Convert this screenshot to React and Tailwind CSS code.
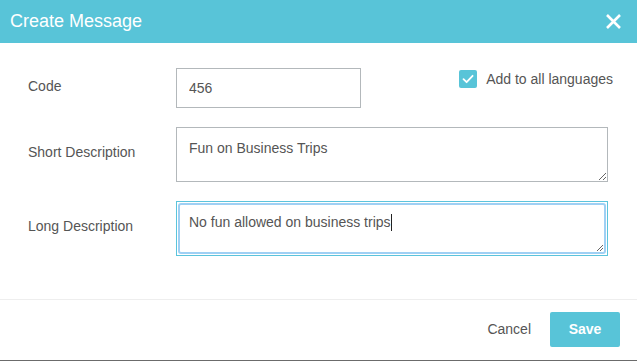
import { useState } from "react";

const font = { fontFamily: '"Liberation Sans", Arial, sans-serif' };

function Checkbox({ checked, onChange }) {
  return (
    <button
      onClick={() => onChange(!checked)}
      className="w-[18px] h-[18px] rounded-[2px] bg-[#58c4d8] flex items-center justify-center"
    >
      {checked && (
        <svg width="14" height="14" viewBox="0 0 14 14" fill="none">
          <path d="M2.5 7.2 L5.6 10.2 L11.6 3.8" stroke="#fff" strokeWidth="1.8" strokeLinecap="round" strokeLinejoin="round" />
        </svg>
      )}
    </button>
  );
}

export default function App() {
  const [allLangs, setAllLangs] = useState(true);

  return (
    <div className="w-[637px] h-[361px] bg-white flex flex-col border-b border-[#6b6b6b] text-[#555]" style={font}>
      {/* Header */}
      <div className="h-[43px] bg-[#58c4d8] flex items-center justify-between pl-[10px] pr-[15px]">
        <h1 className="text-[18px] text-white">Create Message</h1>
        <svg width="17" height="17" viewBox="0 0 17 17">
          <path d="M2 2 L15 15 M15 2 L2 15" stroke="#fff" strokeWidth="2.6" />
        </svg>
      </div>

      {/* Body */}
      <div className="flex-1 pl-[28px] pr-[24px] pt-[25px]">
        <div className="flex items-start">
          <label className="w-[148px] text-[14px] leading-5 pt-[8px]">Code</label>
          <input
            defaultValue="456"
            className="w-[185px] h-[40px] border border-[#b3b8bb] px-[12px] text-[14px] text-[#555] outline-none"
          />
          <div className="flex-1" />
          <div className="flex items-center gap-[9px] pt-[1px]">
            <Checkbox checked={allLangs} onChange={setAllLangs} />
            <span className="text-[14px] leading-5">Add to all languages</span>
          </div>
        </div>

        <div className="flex items-start mt-[19px]">
          <label className="w-[148px] text-[14px] leading-5 pt-[15px]">Short Description</label>
          <textarea
            defaultValue="Fun on Business Trips"
            className="w-[432px] h-[55px] border border-[#b3b8bb] px-[12px] py-[10px] text-[14px] leading-5 text-[#555] outline-none"
          />
        </div>

        <div className="flex items-start mt-[19px]">
          <label className="w-[148px] text-[14px] leading-5 pt-[15px]">Long Description</label>
          <div className="w-[432px] h-[55px] border border-[#5bc4dc] p-px">
            <div className="relative h-full rounded-[3px] border-2 border-[#9fd0f4] px-[9px] py-[7px] text-[14px] leading-5">
              No fun allowed on business trips
              <span className="inline-block w-px h-[17px] bg-[#222] align-[-4px]" />
              <svg className="absolute right-0 bottom-0" width="9" height="9" viewBox="0 0 9 9">
                <path d="M8 2 L2 8 M8 5 L5 8" stroke="#666" strokeWidth="1" />
              </svg>
            </div>
          </div>
        </div>
      </div>

      {/* Footer */}
      <div className="h-[61px] border-t border-[#eeeeee] flex items-center justify-end pr-[17px] gap-[19px] pb-[2px]">
        <button className="text-[14px] text-[#555]">Cancel</button>
        <button className="w-[70px] h-[35px] rounded-[2px] bg-[#58c4d8] text-white text-[14px] font-bold">
          Save
        </button>
      </div>
    </div>
  );
}
